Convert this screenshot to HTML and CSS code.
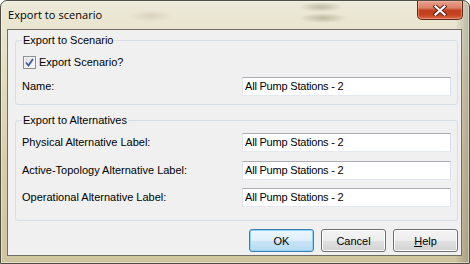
FILE: index.html
```html
<!DOCTYPE html>
<html>
<head>
<meta charset="utf-8">
<link rel="stylesheet" href="styles.css">
</head>
<body>
<div class="window">
  <div class="titlebar">
    <span class="title">Export to scenario</span>
    <div class="close">
      <svg width="14" height="11" viewBox="0 0 14 11">
        <path d="M2.5 1.5 L11.5 9.5 M11.5 1.5 L2.5 9.5" stroke="#5a1e12" stroke-width="4" stroke-linecap="square" fill="none"/>
        <path d="M2.5 1.5 L11.5 9.5 M11.5 1.5 L2.5 9.5" stroke="#ffffff" stroke-width="2.2" stroke-linecap="square" fill="none"/>
      </svg>
    </div>
  </div>
  <div class="client">
    <fieldset class="group g1">
      <legend>Export to Scenario</legend>
      <label class="check"><span class="box"><svg width="9" height="9" viewBox="0 0 9 9"><path d="M1 4.5 L3.5 7.5 L8 1" stroke="#3d5ba8" stroke-width="1.8" fill="none"/></svg></span>Export Scenario?</label>
      <div class="row first"><span class="lbl">Name:</span><div class="input">All Pump Stations - 2</div></div>
    </fieldset>
    <fieldset class="group g2">
      <legend>Export to Alternatives</legend>
      <div class="rows">
        <div class="row"><span class="lbl">Physical Alternative Label:</span><div class="input">All Pump Stations - 2</div></div>
        <div class="row"><span class="lbl">Active-Topology Alternative Label:</span><div class="input">All Pump Stations - 2</div></div>
        <div class="row"><span class="lbl">Operational Alternative Label:</span><div class="input">All Pump Stations - 2</div></div>
      </div>
    </fieldset>
    <div class="buttons">
      <button class="btn default">OK</button>
      <button class="btn">Cancel</button>
      <button class="btn"><u>H</u>elp</button>
    </div>
  </div>
</div>
</body>
</html>
```

FILE: styles.css
```css
* { box-sizing: border-box; }
html, body { margin: 0; padding: 0; background: #ffffff; }
body { width: 470px; height: 264px; overflow: hidden; }

.window {
  width: 470px;
  height: 264px;
  border: 1px solid #4f4c43;
  border-radius: 7px 7px 0 0;
  padding: 0 7px 7px 6px;
  display: flex;
  flex-direction: column;
  box-shadow: inset 0 0 0 1px rgba(255,255,255,0.45);
  background:
    radial-gradient(ellipse 22px 5px at 320px 6px, rgba(110,100,70,0.35), transparent),
    radial-gradient(ellipse 24px 5px at 322px 17px, rgba(110,100,70,0.35), transparent),
    radial-gradient(ellipse 22px 6px at 150px 15px, rgba(150,140,110,0.22), transparent),
    linear-gradient(90deg, rgba(0,0,0,0) 97%, rgba(90,85,70,0.35) 100%),
    linear-gradient(180deg, #ece9d8 0%, #e2dcbc 30%, #d8cfaa 60%, #cec49e 100%);
}

.titlebar {
  height: 28px;
  display: flex;
  align-items: flex-start;
  margin-right: -1px;
}
.title {
  font-family: "Open Sans", "Noto Sans", sans-serif;
  font-size: 11px;
  line-height: 28px;
  color: #000;
  margin-left: 1px;
  letter-spacing: 0.05px;
}
.close {
  margin-left: auto;
  width: 46px;
  height: 19px;
  border: 1px solid #5e2a1f;
  border-top: none;
  border-radius: 0 0 5px 5px;
  display: flex;
  align-items: center;
  justify-content: center;
  background: linear-gradient(180deg, #e8a08c 0%, #d9826a 38%, #c2401f 52%, #c4411f 75%, #dd6a45 100%);
  box-shadow: inset 0 0 0 1px rgba(255,200,180,0.4);
}

.client {
  flex: 1;
  border: 1px solid #6f6d66;
  background: #f0f0f0;
  padding: 4px 3px 0 7px;
  display: flex;
  flex-direction: column;
  font-family: "Liberation Sans", Arial, sans-serif;
  font-size: 11px;
  color: #000;
}

.group {
  margin: 0;
  border: 1px solid #d5dfe5;
  border-radius: 3px;
  padding: 0 6px 8px 6px;
  min-width: 0;
}
.group legend {
  padding: 0 1px;
  line-height: 13px;
  height: 13px;
}
.g2 { margin-top: 9px; padding-top: 6px; padding-bottom: 13px; }

.check {
  display: flex;
  align-items: center;
  height: 13px;
  margin-top: 9px;
  line-height: 13px;
}
.box {
  width: 13px;
  height: 13px;
  margin-left: 1px;
  margin-right: 3px;
  border: 1px solid #8e8f8f;
  background: linear-gradient(135deg, #dcdcdc, #fdfdfd);
  display: flex;
  align-items: center;
  justify-content: center;
  box-shadow: inset 0 0 0 1px #f4f4f4;
}

.rows {
  display: flex;
  flex-direction: column;
  gap: 8.5px;
}
.row {
  display: flex;
  align-items: center;
  justify-content: space-between;
}
.row.first { margin-top: 8px; }
.lbl {
  line-height: 13px;
}
.input {
  width: 209px;
  height: 19px;
  background: #fff;
  border: 1px solid #e3e9ef;
  border-top-color: #abadb3;
  border-left-color: #e2e3ea;
  border-right-color: #dbdfe6;
  padding: 0 2px;
  line-height: 17px;
  letter-spacing: -0.2px;
  white-space: nowrap;
  overflow: hidden;
}

.buttons {
  margin-top: 8px;
  display: flex;
  justify-content: flex-end;
  gap: 7px;
}
.btn {
  width: 65px;
  height: 23px;
  padding: 0;
  font-family: "Liberation Sans", Arial, sans-serif;
  font-size: 11px;
  color: #000;
  border: 1px solid #707070;
  border-radius: 3px;
  background: linear-gradient(180deg, #f4f4f4 0%, #ededed 50%, #e0e0e0 51%, #d3d3d3 100%);
  box-shadow: inset 0 0 0 1px #fcfcfc;
}
.btn.default {
  border-color: #3c7fb1;
  background: linear-gradient(180deg, #edf6fc 0%, #dfeffa 50%, #c9e5f7 51%, #b6dbf2 100%);
  box-shadow: inset 0 0 0 1px #8fd1f2;
}
.btn u { text-decoration: underline; }
```
